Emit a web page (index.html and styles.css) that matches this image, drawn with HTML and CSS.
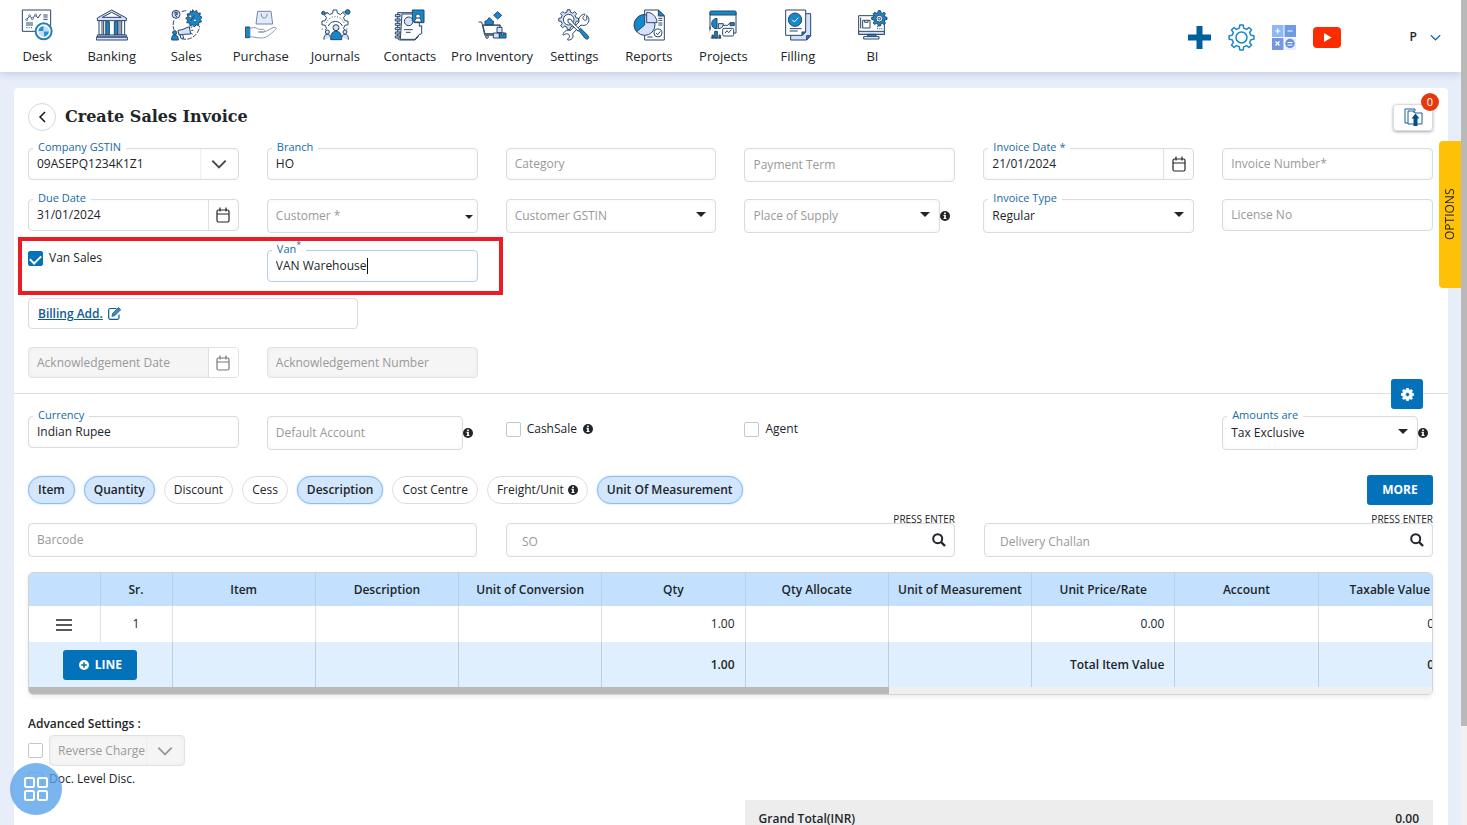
FILE: index.html
```html
<!DOCTYPE html>
<html lang="en">
<head>
<meta charset="utf-8">
<meta name="viewport" content="width=device-width, initial-scale=1">
<title>Create Sales Invoice</title>
<link rel="stylesheet" href="styles.css">
</head>
<body>
<svg class="defs" aria-hidden="true">
  <defs>
    <path id="gear" vector-effect="non-scaling-stroke" d="M9.4-2.2 12.4-1.7V1.7L9.4 2.2 8.1 5.1 10 7.5 7.5 10 5.1 8.1 2.2 9.4 1.7 12.4H-1.7L-2.2 9.4-5.1 8.1-7.5 10-10 7.5-8.1 5.1-9.4 2.2-12.4 1.7V-1.7L-9.4-2.2-8.1-5.1-10-7.5-7.5-10-5.1-8.1-2.2-9.4-1.7-12.4H1.7L2.2-9.4 5.1-8.1 7.5-10 10-7.5 8.1-5.1Z"/>
    <symbol id="info" viewBox="0 0 12 12"><circle cx="6" cy="6" r="6" fill="#212529"/><path d="M5 1.8h2v1.7H5zM4.2 4.6H7v3.8h.8v1.3H4.2V8.400H5V5.900h-.8z" fill="#fff"/></symbol>
    <symbol id="calendar" viewBox="0 0 14 16"><path d="M1 4.500a1.500 1.500 0 0 1 1.500-1.500h9a1.500 1.500 0 0 1 1.500 1.500v9a1.500 1.500 0 0 1-1.500 1.500h-9A1.500 1.500 0 0 1 1 13.500zM1 7h12M4 .5v4M10 .5v4" fill="none" stroke="currentColor" stroke-width="1.200"/></symbol>
    <symbol id="caret" viewBox="0 0 10 5"><path d="M0 0h10L5 5z" fill="#212529"/></symbol>
    <symbol id="chevron" viewBox="0 0 14 9"><path d="M1 1.500 7 7.500l6-6" fill="none" stroke="currentColor" stroke-width="1.700"/></symbol>
    <symbol id="search" viewBox="0 0 14 14"><circle cx="5.700" cy="5.700" r="4.500" fill="none" stroke="#212529" stroke-width="2"/><path d="m9 9 4 4" stroke="#212529" stroke-width="2.400"/></symbol>
  </defs>
</svg>

<header class="topbar">
  <nav class="nav">
    <a href="#"><svg viewBox="63 28 96 96"><path class="w" d="M67 31h85v64H67z"/><path class="l" d="m80 59 9-10 8 8 9-11 8 9 8-12M130 46h13M130 52h13M130 59h13M78 70h21M78 76h21M79 84h3M86 84h3M93 84h3"/><circle class="w t" cx="80" cy="60" r="3"/><circle class="w t" cx="89" cy="48" r="3"/><circle class="w t" cx="97" cy="57" r="3"/><circle class="w t" cx="107" cy="46" r="3"/><circle cx="131" cy="95" r="24" fill="#fff" stroke="#2a7fb5" stroke-width="6"/><path fill="#1e96d8" d="M131 79a16 16 0 0 0-16 16h16zM131 111a16 16 0 0 0 16-16h-16z"/><path fill="#c9d9fa" d="M131 79a16 16 0 0 1 16 16h-16zM131 111a16 16 0 0 1-16-16h16z"/></svg>Desk</a>
    <a href="#"><svg viewBox="287 28 96 96"><path class="p" d="m291 55 43-24 44 24v8h-87z"/><path class="w" d="m306 53 28-15 29 15z"/><path class="w" d="M296 63h9v43h-9zM310 63h7v43h-7zM353 63h6v43h-6zM364 63h9v43h-9z"/><path class="b" d="M317 66h10v40h-10zM342 66h10v40h-10z"/><path class="p" d="M291 106h87v6h-87zM288 112h93v9h-93z"/></svg>Banking</a>
    <a href="#"><svg viewBox="510 28 96 96"><path class="l" stroke-dasharray="14 4" d="M545 36c10-4 14-3 18-2M522 62c-4 12-3 20 0 28M544 117c28 8 52-12 55-38"/><circle class="p" cx="528" cy="44" r="12"/><path class="l" d="M523 38h10M523 43h10M525 38c9 0 9 9 0 9l6 5"/><path class="b" d="m578 30 5 7 7-5 2 9 9-1-2 9 8 4-7 6 5 7-9 3 0 9-8-3-5 7-5-7-8 4-1-9-9-1 4-8-7-5 7-5-3-8 9-1 1-8 7 4z"/><path class="l" d="m571 64 13-17"/><circle class="w t" cx="571" cy="50" r="4"/><circle class="w t" cx="585" cy="62" r="4"/><path class="p" d="m534 92 12-2 22-9 4 22-22 1-13 2z"/><path class="w" d="m540 105 8 0 3 11h-8zM572 84l5-3M574 92h6M573 100l5 4"/><circle class="b" cx="524" cy="99" r="6"/><path class="b" d="M515 121c0-10 2-16 9-16s11 6 11 16z"/></svg>Sales</a>
    <a href="#"><svg viewBox="734 28 96 96"><g opacity=".65"><path class="p" d="M772 35h40l5 38h-50z"/><path class="l" d="M783 42v4c0 12 17 12 17 0v-4"/></g><path class="b" d="M735 82h13v32h-13z"/><path fill="#fff" stroke="#8b97b8" stroke-width="3" d="M749 86c18-6 22 2 28 3h10c8 0 7 8 0 8h-13 16c12-2 22-13 33-14 8 0 4 6 0 9-12 11-24 23-39 23-16 0-25-4-35-4z"/></svg>Purchase</a>
    <a href="#"><svg viewBox="27 28 96 96"><g transform="translate(75 70) scale(3.150)"><use href="#gear" class="w"/></g><path fill="#fff" d="M30 91h92v32H30z"/><path class="l" d="M55 79a23 23 0 0 1 42 0" /><path class="l" stroke-dasharray="3 5" d="M49 70a28 28 0 0 1 53 0M35 88h6M109 88h8"/><circle class="b" cx="40" cy="40" r="5"/><circle class="b" cx="113" cy="37" r="7"/><path class="l" d="M45 40h8M98 37h8"/><circle class="p" cx="52" cy="97" r="6"/><circle class="p" cx="105" cy="97" r="6"/><path class="p" d="M42 120c-1-11 3-16 10-16s9 4 9 9M115 120c1-11-3-16-10-16s-9 4-9 9"/><circle class="p" cx="78" cy="84" r="9"/><path class="b" d="M62 120c0-18 5-25 16-25s17 7 17 25z"/></svg>Journals</a>
    <a href="#"><svg viewBox="252 28 96 96"><path class="p" d="M263 39h62v72l-10 10h-44c-6 0-8-3-8-8z"/><path class="w" d="M276 43h52v37l7-2v24l-8 3-12 14h-44z"/><path class="p" d="M256 45h14v6h-14zM256 58h14v6h-14zM256 71h14v6h-14zM256 84h14v6h-14zM256 97h14v6h-14zM256 109h14v6h-14z"/><path class="l" d="M282 90h26M288 98h14"/><circle class="p" cx="296" cy="65" r="13"/><path class="b" d="M307 31h35v38h-29l-6-6z"/><circle class="w" cx="324" cy="50" r="7"/><path class="w" d="M314 67c0-9 4-12 10-12s10 3 10 12z"/></svg>Contacts</a>
    <a href="#"><svg viewBox="499 28 96 96"><path class="l" d="M507 67h9l9 39h25M519 76h53l-3 17M525 106h38"/><path class="w" d="m520 77 51 0-5 25h-40z"/><path class="b" d="M526 75v-11h5l7-10 8 6v4h5v11zM564 36l12 11-12 11-12-11z"/><circle class="w" cx="532" cy="112" r="4"/><path class="p" d="M551 100h18v15h-18zM562 83h15v16h-15z"/><path class="b" d="M569 100h20v15h-20z"/><path class="w" d="M576 100h6v6h-6z"/></svg>Pro Inventory</a>
    <a href="#"><svg viewBox="748 28 96 96"><g transform="translate(780 60) scale(2.400)"><use href="#gear" class="p"/></g><circle class="w" cx="780" cy="60" r="16"/><path class="w" d="M834 47c9 7 9 20 0 27-5 4-11 4-17 2l-25 26c3 10-1 18-11 19-6 1-5-2-3-4 5-4 6-9 2-13-5-3-9-2-13 1-4 3-5 0-3-4 5-9 14-10 20-8l27-26c-2-11 3-19 13-23 6-2 7 1 3 4-5 4-6 8-2 12 4 3 7 2 10-1z"/><path class="w" d="m778 58 9 1 5 9 22 22-5 5-23-22-8-5z"/><path class="b" d="m810 91 6-5 22 22c6 7-2 14-9 8z"/></svg>Settings</a>
    <a href="#"><svg viewBox="102 28 96 96"><path class="w" d="M137 31h41l18 17v73h-59z"/><path class="b" d="M178 31v18h18z"/><path class="l" d="M178 56h12M178 62h12M178 70h12M178 76h12M145 112h16"/><circle class="p" cx="137" cy="76" r="31"/><path class="b" d="M137 76V45a31 31 0 0 0-24 51z"/><path class="p" d="M143 69V38c16-1 31 14 31 31z"/><circle class="w" cx="177" cy="100" r="12"/><path class="l" d="m171 100 5 5 8-10"/></svg>Reports</a>
    <a href="#"><svg viewBox="325 28 96 96"><path class="w" d="M334 38h78v62h-78z"/><path class="b" d="M334 38c0-3 1-4 4-4h70c3 0 4 1 4 4v8h-78z"/><path class="b" d="M355 56a16 16 0 0 0 0 32z"/><path class="p" d="M359 72h15c0 10-7 15-15 15z"/><path class="l" d="M373 77h14l6-7M384 96v-10"/><path class="b" d="M394 69h13v9h-13z"/><path fill="#fff" d="M332 89h40v34h-40z"/><path class="b" d="M348 95h8v20h-8zM340 106h4v9h-4zM361 106h4v9h-4z"/><path class="l" d="M336 115h32M334 80v12"/><rect class="w" x="372" y="86" width="33" height="23" rx="4"/><path class="l" d="m379 101 6-8 5 6 8-9"/></svg>Projects</a>
    <a href="#"><svg viewBox="549 28 96 96"><path class="p" d="M575 42h60v66l-12 13h-48z"/><path class="b" d="M623 121v-13h12z"/><path class="w" d="M560 31h60v66l-11 10h-49z"/><path class="b" d="M609 107V97h11z"/><circle class="b" cx="588" cy="60" r="20"/><path class="l s" d="m579 60 7 7 12-13"/><path class="l" d="M572 87h36M572 94h24"/></svg>Filling</a>
    <a href="#"><svg viewBox="771 28 96 96"><path class="w" d="M779 48h77v56h-77z"/><path class="p" d="M779 95h77v9h-77z"/><path class="b" d="M806 104h25v7h-25z"/><path class="w" d="M794 111h46v7h-46z"/><path class="w" d="M791 62h22v23h-22z"/><path class="l" d="M797 62v6h10v-6M834 87h3M834 81h3M841 87h3M847 87h3M785 54v32"/><g transform="translate(841 56) scale(1.850)"><use href="#gear" class="b"/></g><circle class="w" cx="841" cy="57" r="10"/><circle class="p" cx="841" cy="57" r="4"/></svg>BI</a>
  </nav>
  <div class="tools">
    <button aria-label="Add"><svg width="23" height="23" viewBox="0 0 23 23"><path d="M9 0h5v9h9v5h-9v9H9v-9H0V9h9z" fill="#00609c" stroke="#00609c" stroke-linejoin="round"/></svg></button>
    <button aria-label="Settings"><svg width="27" height="27" viewBox="-13.500 -13.500 27 27" fill="none" stroke="#1c87c5" stroke-width="1.500" stroke-linejoin="round"><use href="#gear"/><circle r="5.500"/></svg></button>
    <button aria-label="Calculator"><svg width="24" height="25" viewBox="0 0 24 25"><path fill="#8fb9f3" d="M0 0h11.500v12H0z"/><path fill="#6f9be6" d="M12.500 0H24v12H12.500z"/><path fill="#7397e5" d="M0 13h11.500v12H0z"/><path fill="#e7effd" d="M12.500 13H24v12H12.500z"/><circle cx="18" cy="18.500" r="4.700" fill="#6d8fe0"/><path d="M5.700 3.500v5M3.200 6h5M15.500 6h5M3.500 16.500l4 4M7.500 16.500l-4 4M15.500 17.500h5M15.500 20h5" stroke="#fff" stroke-width="1.200"/></svg></button>
    <button aria-label="Video help"><svg width="28" height="21" viewBox="0 0 28 21"><rect width="28" height="21" rx="4" fill="#fb2c00"/><path d="m11 6 7.500 4.500L11 15z" fill="#fff"/></svg></button>
    <button class="user">P <svg width="11" height="7"><use href="#chevron"/></svg></button>
  </div>
</header>

<main class="card">
  <div class="title-row">
    <button class="back" aria-label="Back"><svg width="7" height="12" viewBox="0 0 7 12"><path d="M6 1 1 6l5 5" fill="none" stroke="#111" stroke-width="1.500"/></svg></button>
    <h1>Create Sales Invoice</h1>
    <button class="upload" aria-label="Uploads"><svg width="19" height="19" viewBox="0 0 19 19"><path d="M1 1h10v2M1 1v14h3M4 3h6l1 2h7v11H4zM10 5V3" fill="none" stroke="#1a5f93"/><path d="m11.500 5.500 4 5h-2V18h-4v-7.500h-2z" fill="#00508a"/></svg><span class="badge">0</span></button>
  </div>

  <form class="grid header-fields">
    <div class="field"><div class="box"><select id="gstin" class="shade"><option>09ASEPQ1234K1Z1</option></select><svg class="chev" width="16" height="10"><use href="#chevron"/></svg></div><label for="gstin">Company GSTIN</label></div>
    <div class="field"><div class="box"><input id="branch" value="HO"></div><label for="branch">Branch</label></div>
    <div class="field"><div class="box"><input aria-label="Category" placeholder="Category"></div></div>
    <div class="field"><div class="box tall"><input aria-label="Payment Term" placeholder="Payment Term"></div></div>
    <div class="field"><div class="box"><input id="idate" value="21/01/2024"><button type="button" aria-label="Pick invoice date"><svg width="14" height="16"><use href="#calendar"/></svg></button></div><label for="idate">Invoice Date *</label></div>
    <div class="field"><div class="box"><input aria-label="Invoice Number" placeholder="Invoice Number*"></div></div>

    <div class="field"><div class="box"><input id="ddate" value="31/01/2024"><button type="button" aria-label="Pick due date"><svg width="14" height="16"><use href="#calendar"/></svg></button></div><label for="ddate">Due Date</label></div>
    <div class="field"><div class="box tall"><select class="empty" aria-label="Customer"><option>Customer *</option></select><svg class="caret near" width="8" height="4"><use href="#caret"/></svg></div></div>
    <div class="field"><div class="box tall"><select class="empty" aria-label="Customer GSTIN"><option>Customer GSTIN</option></select><svg class="caret" width="10" height="5"><use href="#caret"/></svg></div></div>
    <div class="field with-info"><div class="box tall"><select class="empty" aria-label="Place of Supply"><option>Place of Supply</option></select><svg class="caret" width="10" height="5"><use href="#caret"/></svg></div><svg width="10" height="10"><use href="#info"/></svg></div>
    <div class="field"><div class="box tall"><select id="itype"><option>Regular</option></select><svg class="caret" width="10" height="5"><use href="#caret"/></svg></div><label for="itype">Invoice Type</label></div>
    <div class="field"><div class="box"><input aria-label="License No" placeholder="License No"></div></div>

    <label class="check"><input type="checkbox" checked>Van Sales</label>
    <div class="field"><div class="box focus"><input id="van" value="VAN Warehouse"><span class="cursor" aria-hidden="true"></span></div><label for="van">Van<sup>*</sup></label></div>
    <div class="highlight"></div>
  </form>

  <div class="billing"><a href="#">Billing Add.</a><svg width="13" height="13" viewBox="0 0 13 13"><path d="M8.500 1.500H2A1.500 1.500 0 0 0 .7 3v8A1.500 1.500 0 0 0 2 12.300h7.500A1.500 1.500 0 0 0 11 11V7.500" fill="none" stroke="#0f5b94" stroke-width="1.200"/><path d="m4.500 6.500 6-6 2.200 2.200-6 6-2.700.6z" fill="#4a87b5" stroke="#0f5b94" stroke-width=".8"/></svg></div>

  <div class="grid ack">
    <div class="field"><div class="box off"><input aria-label="Acknowledgement Date" placeholder="Acknowledgement Date" disabled><button type="button" aria-label="Pick acknowledgement date" disabled><svg width="14" height="16"><use href="#calendar"/></svg></button></div></div>
    <div class="field"><div class="box off"><input aria-label="Acknowledgement Number" placeholder="Acknowledgement Number" disabled></div></div>
  </div>

  <div class="divider"><button class="primary" aria-label="Form settings"><svg width="13" height="13" viewBox="-13 -13 26 26" fill="none" stroke="#fff" stroke-width="1"><use href="#gear" fill="#fff"/><circle r="4" fill="#0372bb"/></svg></button></div>

  <div class="grid currency">
    <div class="field"><div class="box"><input id="cur" value="Indian Rupee"></div><label for="cur">Currency</label></div>
    <div class="field with-info"><div class="box tall"><input aria-label="Default Account" placeholder="Default Account"></div><svg width="10" height="10"><use href="#info"/></svg></div>
    <label class="check"><input type="checkbox">CashSale <svg width="10" height="10"><use href="#info"/></svg></label>
    <label class="check"><input type="checkbox">Agent</label>
    <div class="field with-info last"><div class="box tall"><select id="amt"><option>Tax Exclusive</option></select><svg class="caret" width="10" height="5"><use href="#caret"/></svg></div><svg width="10" height="10"><use href="#info"/></svg><label for="amt">Amounts are</label></div>
  </div>

  <div class="chips">
    <button class="chip on">Item</button><button class="chip on">Quantity</button><button class="chip">Discount</button><button class="chip">Cess</button><button class="chip on">Description</button><button class="chip">Cost Centre</button><button class="chip">Freight/Unit <svg width="10" height="10"><use href="#info"/></svg></button><button class="chip on">Unit Of Measurement</button>
    <button class="primary more">MORE</button>
  </div>

  <div class="lookups">
    <div class="box tall"><input aria-label="Barcode" placeholder="Barcode"></div>
    <div class="lookup"><span>PRESS ENTER</span><div class="box tall wide"><input aria-label="SO" placeholder="SO"><button aria-label="Search SO"><svg width="14" height="14"><use href="#search"/></svg></button></div></div>
    <div class="lookup"><span>PRESS ENTER</span><div class="box tall wide"><input aria-label="Delivery Challan" placeholder="Delivery Challan"><button aria-label="Search delivery challan"><svg width="14" height="14"><use href="#search"/></svg></button></div></div>
  </div>

  <div class="items">
    <table>
      <colgroup><col class="c-first"><col class="c-small"><col span="9"></colgroup>
      <thead><tr><th></th><th>Sr.</th><th>Item</th><th>Description</th><th>Unit of Conversion</th><th>Qty</th><th>Qty Allocate</th><th>Unit of Measurement</th><th>Unit Price/Rate</th><th>Account</th><th>Taxable Value</th></tr></thead>
      <tbody><tr><td class="mid"><svg width="16" height="12" viewBox="0 0 16 12"><path d="M0 1h16M0 6h16M0 11h16" stroke="#212529" stroke-width="1.500"/></svg></td><td class="mid">1</td><td></td><td></td><td></td><td>1.00</td><td></td><td></td><td>0.00</td><td></td><td>0.00</td></tr></tbody>
      <tfoot><tr><td class="mid" colspan="2"><button class="primary line"><svg width="10" height="10" viewBox="0 0 10 10"><circle cx="5" cy="5" r="5" fill="#fff"/><path d="M5 2.200v5.600M2.200 5h5.600" stroke="#0372bb" stroke-width="1.500"/></svg>LINE</button></td><td></td><td></td><td></td><td>1.00</td><td></td><td></td><td>Total Item Value</td><td></td><td>0.00</td></tr></tfoot>
    </table>
    <div class="hscroll"><div></div></div>
  </div>

  <h2>Advanced Settings :</h2>
  <div class="reverse"><input type="checkbox" aria-label="Enable reverse charge"><div class="box off"><select class="shade" aria-label="Reverse Charge" disabled><option>Reverse Charge</option></select><svg class="chev" width="16" height="10"><use href="#chevron"/></svg></div></div>
  <label class="check doc"><input type="checkbox">Doc. Level Disc.</label>

  <div class="total"><span>Grand Total(INR)</span><span>0.00</span></div>
</main>

<button class="options">OPTIONS</button>
<button class="launcher" aria-label="Open menu"><svg width="24" height="24" viewBox="0 0 24 24" fill="none" stroke="#fff" stroke-width="2"><rect x="1" y="1" width="9" height="9" rx="1.500"/><rect x="14" y="1" width="9" height="9" rx="1.500"/><rect x="1" y="14" width="9" height="9" rx="1.500"/><rect x="14" y="14" width="9" height="9" rx="1.500"/></svg></button>
<div class="vscroll" aria-hidden="true"><div></div></div>
</body>
</html>
```

FILE: styles.css
```css
* { box-sizing: border-box; }
body {
  margin: 0;
  height: 100vh;
  overflow: hidden;
  padding-right: 6px;
  background: #e8eef9;
  color: #212529;
  font: 12px/16px "Open Sans", sans-serif;
}
button, input, select { font: inherit; color: inherit; margin: 0; }
button { border: 0; background: none; padding: 0; cursor: pointer; }
svg { display: block; flex: none; }
.defs { position: absolute; width: 0; height: 0; }

/* Top navigation */
.topbar {
  position: relative;
  display: flex;
  align-items: flex-start;
  justify-content: space-between;
  height: 72px;
  background: #fff;
  box-shadow: 0 2px 8px rgba(60, 80, 130, .22);
}
.nav { display: flex; padding-top: 9px; }
.nav a {
  display: flex;
  flex-direction: column;
  align-items: center;
  gap: 6px;
  min-width: 5.08vw;
  padding: 0 4px;
  color: #212529;
  font-size: 13px;
  line-height: 18px;
  white-space: nowrap;
  text-decoration: none;
}
.nav svg { width: 32px; height: 32px; }
.w, .p, .b, .l { stroke: #2b4668; stroke-width: 3; stroke-linejoin: round; }
.w { fill: #fff; }
.p { fill: #d5e0fb; }
.b { fill: #1488c8; }
.l { fill: none; }
.s { stroke: #fff; }
use.w, use.p, use.b { stroke-width: 1; }
.t { stroke-width: 2; }
.tools { display: flex; align-items: center; gap: 17px; height: 74px; padding-right: 20px; }
.user { display: flex; align-items: center; gap: 13px; margin-left: 52px; font-weight: 600; }
.user svg { color: #1c6fb0; }

/* Invoice card */
.card {
  margin: 16px 13px 0 14px;
  padding: 14px 15px 0 14px;
  border-radius: 4px;
  background: #fff;
}
.title-row { display: flex; align-items: center; gap: 9px; height: 30px; }
.back {
  display: grid;
  place-items: center;
  width: 28px;
  height: 28px;
  border: 1px solid #d5d8dc;
  border-radius: 50%;
}
h1 { margin: 0; font: bold 16px/24px "DejaVu Serif", serif; }
.upload {
  position: relative;
  display: grid;
  place-items: center;
  width: 40px;
  height: 27px;
  margin-left: auto;
  border: 1px solid #dcdcdc;
  border-radius: 4px;
  box-shadow: 0 1px 3px rgba(0, 0, 0, .35);
}
.badge {
  position: absolute;
  top: -12px;
  right: -7px;
  width: 18px;
  height: 18px;
  border-radius: 50%;
  background: #e23a0c;
  color: #fff;
  font-size: 11px;
  line-height: 18px;
}

/* Fields */
.grid {
  position: relative;
  display: grid;
  grid-template-columns: repeat(6, minmax(0, 1fr));
  column-gap: 28px;
  align-items: start;
}
.header-fields { grid-auto-rows: 51px; margin-top: 16px; }
.field { position: relative; }
.box {
  position: relative;
  display: flex;
  align-items: stretch;
  height: 32px;
  border: 1px solid #d9dbde;
  border-radius: 4px;
  background: #fff;
  box-shadow: inset 0 0 5px rgba(0, 0, 0, .04);
}
.tall { height: 34px; }
.focus { border-color: #b9cfe6; }
.off { background: #f5f5f5; color: #999; height: 31px; border-color: #e2e2e2; }
.off > button { background: #fff; border-radius: 0 3px 3px 0; }
.box input, .box select {
  flex: 1;
  min-width: 0;
  width: 100%;
  border: 0;
  padding: 0 8px;
  background: none;
  outline: 0;
  appearance: none;
  opacity: 1;
}
.box .empty, input::placeholder { color: #999; opacity: 1; }
.box > button {
  display: grid;
  place-items: center;
  width: 30px;
  border-left: 1px solid #dddfe2;
  color: #212529;
}
.box.off > button { color: #777; }
.caret { position: absolute; right: 9px; top: 12px; pointer-events: none; }
.caret.near { right: 4px; top: 15px; }
.chev { position: absolute; right: 11px; top: 10px; color: #444; pointer-events: none; }
.off .chev { color: #999; }
.box .shade { background: linear-gradient(90deg, transparent calc(100% - 38px), #ececec calc(100% - 38px), transparent calc(100% - 36px)); }
.field > label {
  position: absolute;
  top: -9px;
  left: 5px;
  padding: 0 5px;
  background: #fff;
  color: #176aa6;
  font-size: 11px;
  line-height: 16px;
}
sup { font-size: 9px; line-height: 0; }
.with-info { display: grid; grid-template-columns: 1fr 15px; align-items: center; }
.last { grid-column: 6; }
.cursor { position: absolute; left: 99px; top: 7px; width: 1px; height: 16px; background: #111; }

input[type="checkbox"] {
  appearance: none;
  flex: none;
  width: 15px;
  height: 15px;
  border: 1px solid #c3c7cc;
  border-radius: 2px;
  background: #fff;
}
input[type="checkbox"]:checked {
  border-color: #0372bb;
  background: #0372bb;
  display: grid;
  justify-items: center;
  padding-top: 3px;
}
input[type="checkbox"]:checked::after {
  content: "";
  width: 9px;
  height: 5px;
  border: solid #fff;
  border-width: 0 0 2px 2px;
  transform: rotate(-45deg);
}
.check { display: flex; align-items: center; gap: 6px; }
.highlight {
  position: absolute;
  left: -10px;
  top: 89px;
  width: calc(100% / 3 + 17px);
  height: 58px;
  border: 4px solid #ec1c24;
  pointer-events: none;
}

.billing {
  display: flex;
  align-items: center;
  gap: 5px;
  width: 330px;
  height: 31px;
  margin-top: -3px;
  padding: 0 9px;
  border: 1px solid #d9dbde;
  border-radius: 4px;
}
.billing a { color: #0f5b94; font-weight: 600; }
.ack { margin-top: 18px; }
.divider { position: relative; height: 1px; margin: 15px -15px 0 -14px; background: #dddfe2; }
.primary {
  display: inline-flex;
  align-items: center;
  justify-content: center;
  gap: 6px;
  height: 30px;
  border-radius: 3px;
  background: #0372bb;
  color: #fff;
  font-weight: 700;
}
.divider .primary { position: absolute; right: 25px; top: -14px; width: 32px; }
.currency { margin-top: 22px; }
.currency .check { margin-top: 5px; }

/* Column chips */
.chips { display: flex; align-items: center; gap: 9px; margin-top: 25px; }
.chip {
  display: flex;
  align-items: center;
  gap: 4px;
  height: 28px;
  padding: 0 9px;
  border: 1px solid #dedede;
  border-radius: 14px;
  white-space: nowrap;
}
.chip.on {
  border-color: #8ebcf0;
  background: #d2e7fd;
  font-weight: 600;
  box-shadow: 0 0 2px #a9ccf3;
}
.more { width: 66px; margin-left: auto; }
.lookups { display: grid; grid-template-columns: repeat(3, minmax(0, 1fr)); column-gap: 29px; margin-top: 18px; }
.lookup { position: relative; }
.lookup span { position: absolute; right: 0; top: -10px; font-size: 10px; line-height: 13px; }
.box.wide input { padding: 3px 15px 0; }
.box.wide > button { border: 0; }

/* Line items */
.items {
  margin-top: 15px;
  overflow: hidden;
  border: 1px solid #d4d4d4;
  border-radius: 5px;
  box-shadow: 0 2px 5px rgba(0, 0, 0, .08);
}
table { width: 1433px; table-layout: fixed; border-collapse: collapse; }
.c-first { width: 71px; }
.c-small { width: 72px; }
th, td { border-right: 1px solid #b5d0ea; padding: 0 10px; text-align: right; white-space: nowrap; }
th { height: 33px; padding: 0; background: #c3e0fe; font-weight: 600; text-align: center; }
tbody td { height: 36px; border-color: #dcdfe3; }
tfoot td { height: 45px; background: #dfeffe; font-weight: 600; }
td.mid { text-align: center; padding: 0; }
td.mid > svg { display: inline-block; vertical-align: middle; }
.line { width: 74px; }
.hscroll { height: 7px; background: #efefef; }
.hscroll div { width: 61.3%; height: 7px; background: #b9b9b9; }

/* Footer settings */
h2 { margin: 21px 0 3px; font-size: 12px; line-height: 16px; font-weight: 600; }
.reverse { display: flex; align-items: center; gap: 6px; }
.reverse .box { width: 136px; }
.doc { margin-top: 5px; }
.total {
  display: flex;
  justify-content: space-between;
  width: 49%;
  margin: 13px 0 0 auto;
  padding: 11px 14px 30px;
  background: #ededed;
  font-weight: 600;
}

.options {
  position: fixed;
  right: 6px;
  top: 141px;
  width: 22px;
  height: 147px;
  border-radius: 0 4px 4px 0;
  background: #ffc107;
  writing-mode: vertical-rl;
  transform: rotate(180deg);
}
.launcher {
  position: fixed;
  left: 10px;
  top: 763px;
  display: grid;
  place-items: center;
  width: 52px;
  height: 52px;
  border-radius: 50%;
  background: rgba(90, 163, 235, .8);
}
.vscroll { position: fixed; right: 0; top: 0; width: 6px; height: 100vh; background: #f1f1f1; }
.vscroll div { height: 88%; background: #b9b9b9; }
```
